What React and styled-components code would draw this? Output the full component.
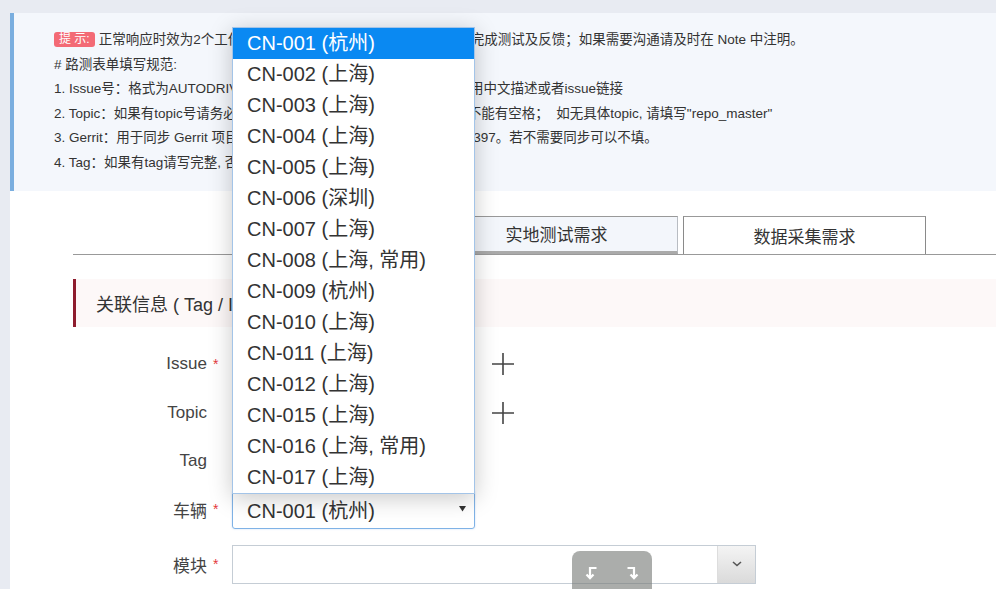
import React from "react";
import styled, { createGlobalStyle } from "styled-components";

const GlobalStyle = createGlobalStyle`
    html, body {
        margin: 0;
        padding: 0;
        background: #e8ebf2;
        font-family: "Liberation Sans", "Noto Sans CJK SC", sans-serif;
        overflow: hidden;
    }
`

const Page = styled.div`
    padding: 13px 0 0 10px;
    min-height: 589px;
    box-sizing: border-box;
`

const Notice = styled.section`
    background: #f4f7fc;
    border-left: 4px solid #7aaedf;
    padding: 15px 20px 15px 40px;
    font-size: 13.5px;
    line-height: 24.6px;
    color: #333;
`

const NoticeLine = styled.div`
    white-space: nowrap;
`

const Badge = styled.span`
    display: inline-block;
    background: #f36a75;
    color: #fff;
    font-size: 12px;
    line-height: 15px;
    padding: 0 5px;
    border-radius: 3px;
    margin-right: 4px;
    vertical-align: 1px;
`

const Content = styled.main`
    background: #fff;
    padding: 25px 0 60px 63px;
`

const TabBar = styled.nav`
    display: flex;
    gap: 5px;
    padding-left: 362px;
    border-bottom: 1px solid #999;
`

const Tab = styled.div`
    width: 243px;
    height: 38px;
    box-sizing: border-box;
    display: flex;
    align-items: center;
    justify-content: center;
    font-size: 17px;
    color: #333;
    background: ${p => (p.$active ? "#f3f6fb" : "#fff")};
    border: 1px solid ${p => (p.$active ? "#b8bcc2" : "#8a8a8a")};
    border-top-color: #999;
    border-bottom: ${p => (p.$active ? "3px solid #aaa" : "0")};
`

const SectionHeader = styled.h3`
    margin: 24px 0 0;
    height: 48px;
    display: flex;
    align-items: center;
    padding-left: 20px;
    background: #fdf8f8;
    border-left: 3px solid #8e1c2e;
    font-size: 18px;
    font-weight: normal;
    color: #333;
`

const Row = styled.div`
    display: grid;
    grid-template-columns: 134px 25px auto auto;
    align-items: center;
    justify-content: start;
    min-height: 39px;
    margin-top: ${p => p.$space}px;
`

const Label = styled.label`
    text-align: right;
    font-size: 17px;
    color: #444;
`

const Star = styled.span`
    color: #e4393c;
    font-size: 14px;
    padding-left: 6px;
`

const TextInput = styled.input`
    width: 243px;
    height: 36px;
    box-sizing: border-box;
    border: 1px solid #c8d0d8;
    border-radius: 2px;
`

const AddButton = styled.button`
    margin-left: 16px;
    width: 24px;
    height: 24px;
    padding: 0;
    border: 0;
    background: none;
    display: flex;
    align-items: center;
    justify-content: center;
`

const SelectWrap = styled.div`
    position: relative;
    width: 243px;
`

const SelectBox = styled.div`
    height: 39px;
    box-sizing: border-box;
    border: 1px solid #7fb2e6;
    border-radius: 3px;
    display: flex;
    align-items: center;
    justify-content: space-between;
    padding: 0 8px 0 14px;
    font-size: 20px;
    color: #333;
    box-shadow: 0 0 2px rgba(90, 150, 220, 0.35);
`

const DropList = styled.ul`
    position: absolute;
    left: 0;
    right: 0;
    bottom: calc(100% - 4px);
    margin: 0;
    padding: 0;
    list-style: none;
    background: #fff;
    border: 1px solid #a3c4e8;
    box-shadow: 0 4px 22px rgba(0, 0, 0, 0.22);
    z-index: 5;
`

const DropItem = styled.li`
    height: 31px;
    line-height: 31px;
    padding-left: 14px;
    font-size: 20px;
    color: ${p => (p.$selected ? "#fff" : "#333")};
    background: ${p => (p.$selected ? "#0a89f2" : "transparent")};
    white-space: nowrap;
`

const WideSelect = styled.div`
    width: 524px;
    height: 39px;
    box-sizing: border-box;
    border: 1px solid #c5cdd5;
    display: flex;
    justify-content: flex-end;
`

const ArrowCell = styled.div`
    width: 37px;
    border-left: 1px solid #ddd;
    background: linear-gradient(#f4f4f4, #dadada);
    display: flex;
    align-items: center;
    justify-content: center;
`

const HistoryBar = styled.div`
    position: fixed;
    left: 572px;
    top: 551px;
    width: 80px;
    height: 48px;
    border-radius: 8px;
    background: rgba(120, 122, 120, 0.62);
    display: flex;
    justify-content: space-around;
    padding-top: 14px;
    box-sizing: border-box;
    z-index: 10;
`

const vehicles = [
    "CN-001 (杭州)", "CN-002 (上海)", "CN-003 (上海)", "CN-004 (上海)",
    "CN-005 (上海)", "CN-006 (深圳)", "CN-007 (上海)", "CN-008 (上海, 常用)",
    "CN-009 (杭州)", "CN-010 (上海)", "CN-011 (上海)", "CN-012 (上海)",
    "CN-015 (上海)", "CN-016 (上海, 常用)", "CN-017 (上海)",
];

const Plus = () => (
    <svg width="24" height="24" viewBox="0 0 24 24">
        <path d="M12 1v22M1 12h22" stroke="#444" strokeWidth="1.6" />
    </svg>
);

const Undo = ({ flip }) => (
    <svg width="14" height="16" viewBox="0 0 14 16" style={flip ? { transform: "scaleX(-1)" } : undefined}>
        <path d="M11.5 3H5V13M1.5 9.5l3.5 3.6 3.5-3.6" stroke="#fff" strokeWidth="2.2" fill="none" />
    </svg>
);

const App = () => {
    return (
        <Page>
            <GlobalStyle />
            <Notice>
                <NoticeLine>
                    <Badge>提 示:</Badge>正常响应时效为2个工作日，测试人员将在收到需求后尽快安排完成测试及反馈；如果需要沟通请及时在 Note 中注明。
                </NoticeLine>
                <NoticeLine># 路测表单填写规范:</NoticeLine>
                <NoticeLine>1. Issue号：格式为AUTODRIVE-12345，多个Issue请以逗号隔开，不用中文描述或者issue链接</NoticeLine>
                <NoticeLine>2. Topic：如果有topic号请务必填写完整的topic名称，并区分大小写，不能有空格；{"\u00a0\u00a0"}如无具体topic, 请填写"repo_master"</NoticeLine>
                <NoticeLine>3. Gerrit：用于同步 Gerrit 项目的变更，请填写对应的change号，如12397。若不需要同步可以不填。</NoticeLine>
                <NoticeLine>4. Tag：如果有tag请写完整, 否则可以不填。</NoticeLine>
            </Notice>

            <Content>
                <TabBar>
                    <Tab $active>实地测试需求</Tab>
                    <Tab>数据采集需求</Tab>
                </TabBar>

                <SectionHeader>关联信息 ( Tag / Issue / Topic )</SectionHeader>

                <Row $space={18}>
                    <Label>Issue</Label>
                    <Star>*</Star>
                    <TextInput />
                    <AddButton><Plus /></AddButton>
                </Row>
                <Row $space={10}>
                    <Label>Topic</Label>
                    <span />
                    <TextInput />
                    <AddButton><Plus /></AddButton>
                </Row>
                <Row $space={9}>
                    <Label>Tag</Label>
                    <span />
                    <TextInput />
                </Row>
                <Row $space={9}>
                    <Label>车辆</Label>
                    <Star>*</Star>
                    <SelectWrap>
                        <DropList>
                            {vehicles.map((v, i) => (
                                <DropItem key={v} $selected={i === 0}>{v}</DropItem>
                            ))}
                        </DropList>
                        <SelectBox>
                            <span>{vehicles[0]}</span>
                            <svg width="7" height="6" viewBox="0 0 7 6">
                                <path d="M0 0h7L3.5 5.5z" fill="#333" />
                            </svg>
                        </SelectBox>
                    </SelectWrap>
                </Row>
                <Row $space={16}>
                    <Label>模块</Label>
                    <Star>*</Star>
                    <WideSelect>
                        <ArrowCell>
                            <svg width="10" height="6" viewBox="0 0 10 6">
                                <path d="M1 1l4 3.5L9 1" stroke="#555" strokeWidth="1.6" fill="none" />
                            </svg>
                        </ArrowCell>
                    </WideSelect>
                </Row>
            </Content>

            <HistoryBar>
                <Undo />
                <Undo flip />
            </HistoryBar>
        </Page>
    );
};

export default App;
